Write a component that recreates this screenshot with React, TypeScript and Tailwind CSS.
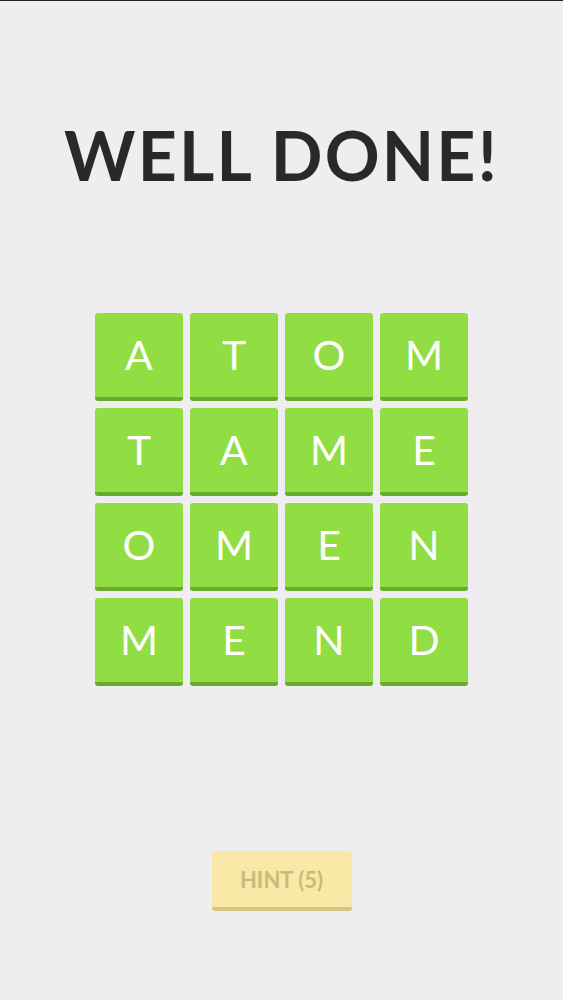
import React from 'react';

const rows = ['ATOM', 'TAME', 'OMEN', 'MEND'];

export default function App() {
  return (
    <div className="w-[563px] h-[1000px] bg-[#efedf0] flex flex-col items-center border-t border-[#222]" style={{ fontFamily: 'Lato, "Open Sans", sans-serif' }}>
      <h1 className="mt-[110px] text-[68px] leading-[88px] font-bold text-[#2a282b] tracking-[2.2px]">WELL DONE!</h1>

      <div className="mt-[114px] grid grid-cols-4 gap-x-[7px] gap-y-[7px]">
        {rows.map((word, r) =>
          word.split('').map((ch, c) => (
            <div
              key={`${r}-${c}`}
              className="w-[88px] h-[88px] rounded-[3px] bg-[#91dd44] border-b-4 border-[#6aab2e] flex items-center justify-center text-white text-[41px] font-normal"
            >
              {ch}
            </div>
          ))
        )}
      </div>

      <button className="mt-[165px] w-[140px] h-[60px] rounded-[3px] bg-[#f9e8a6] border-b-[4px] border-[#d6c487] text-[#cbbb7b] text-[22px] font-bold tracking-[0px]">
        HINT (5)
      </button>
    </div>
  );
}
